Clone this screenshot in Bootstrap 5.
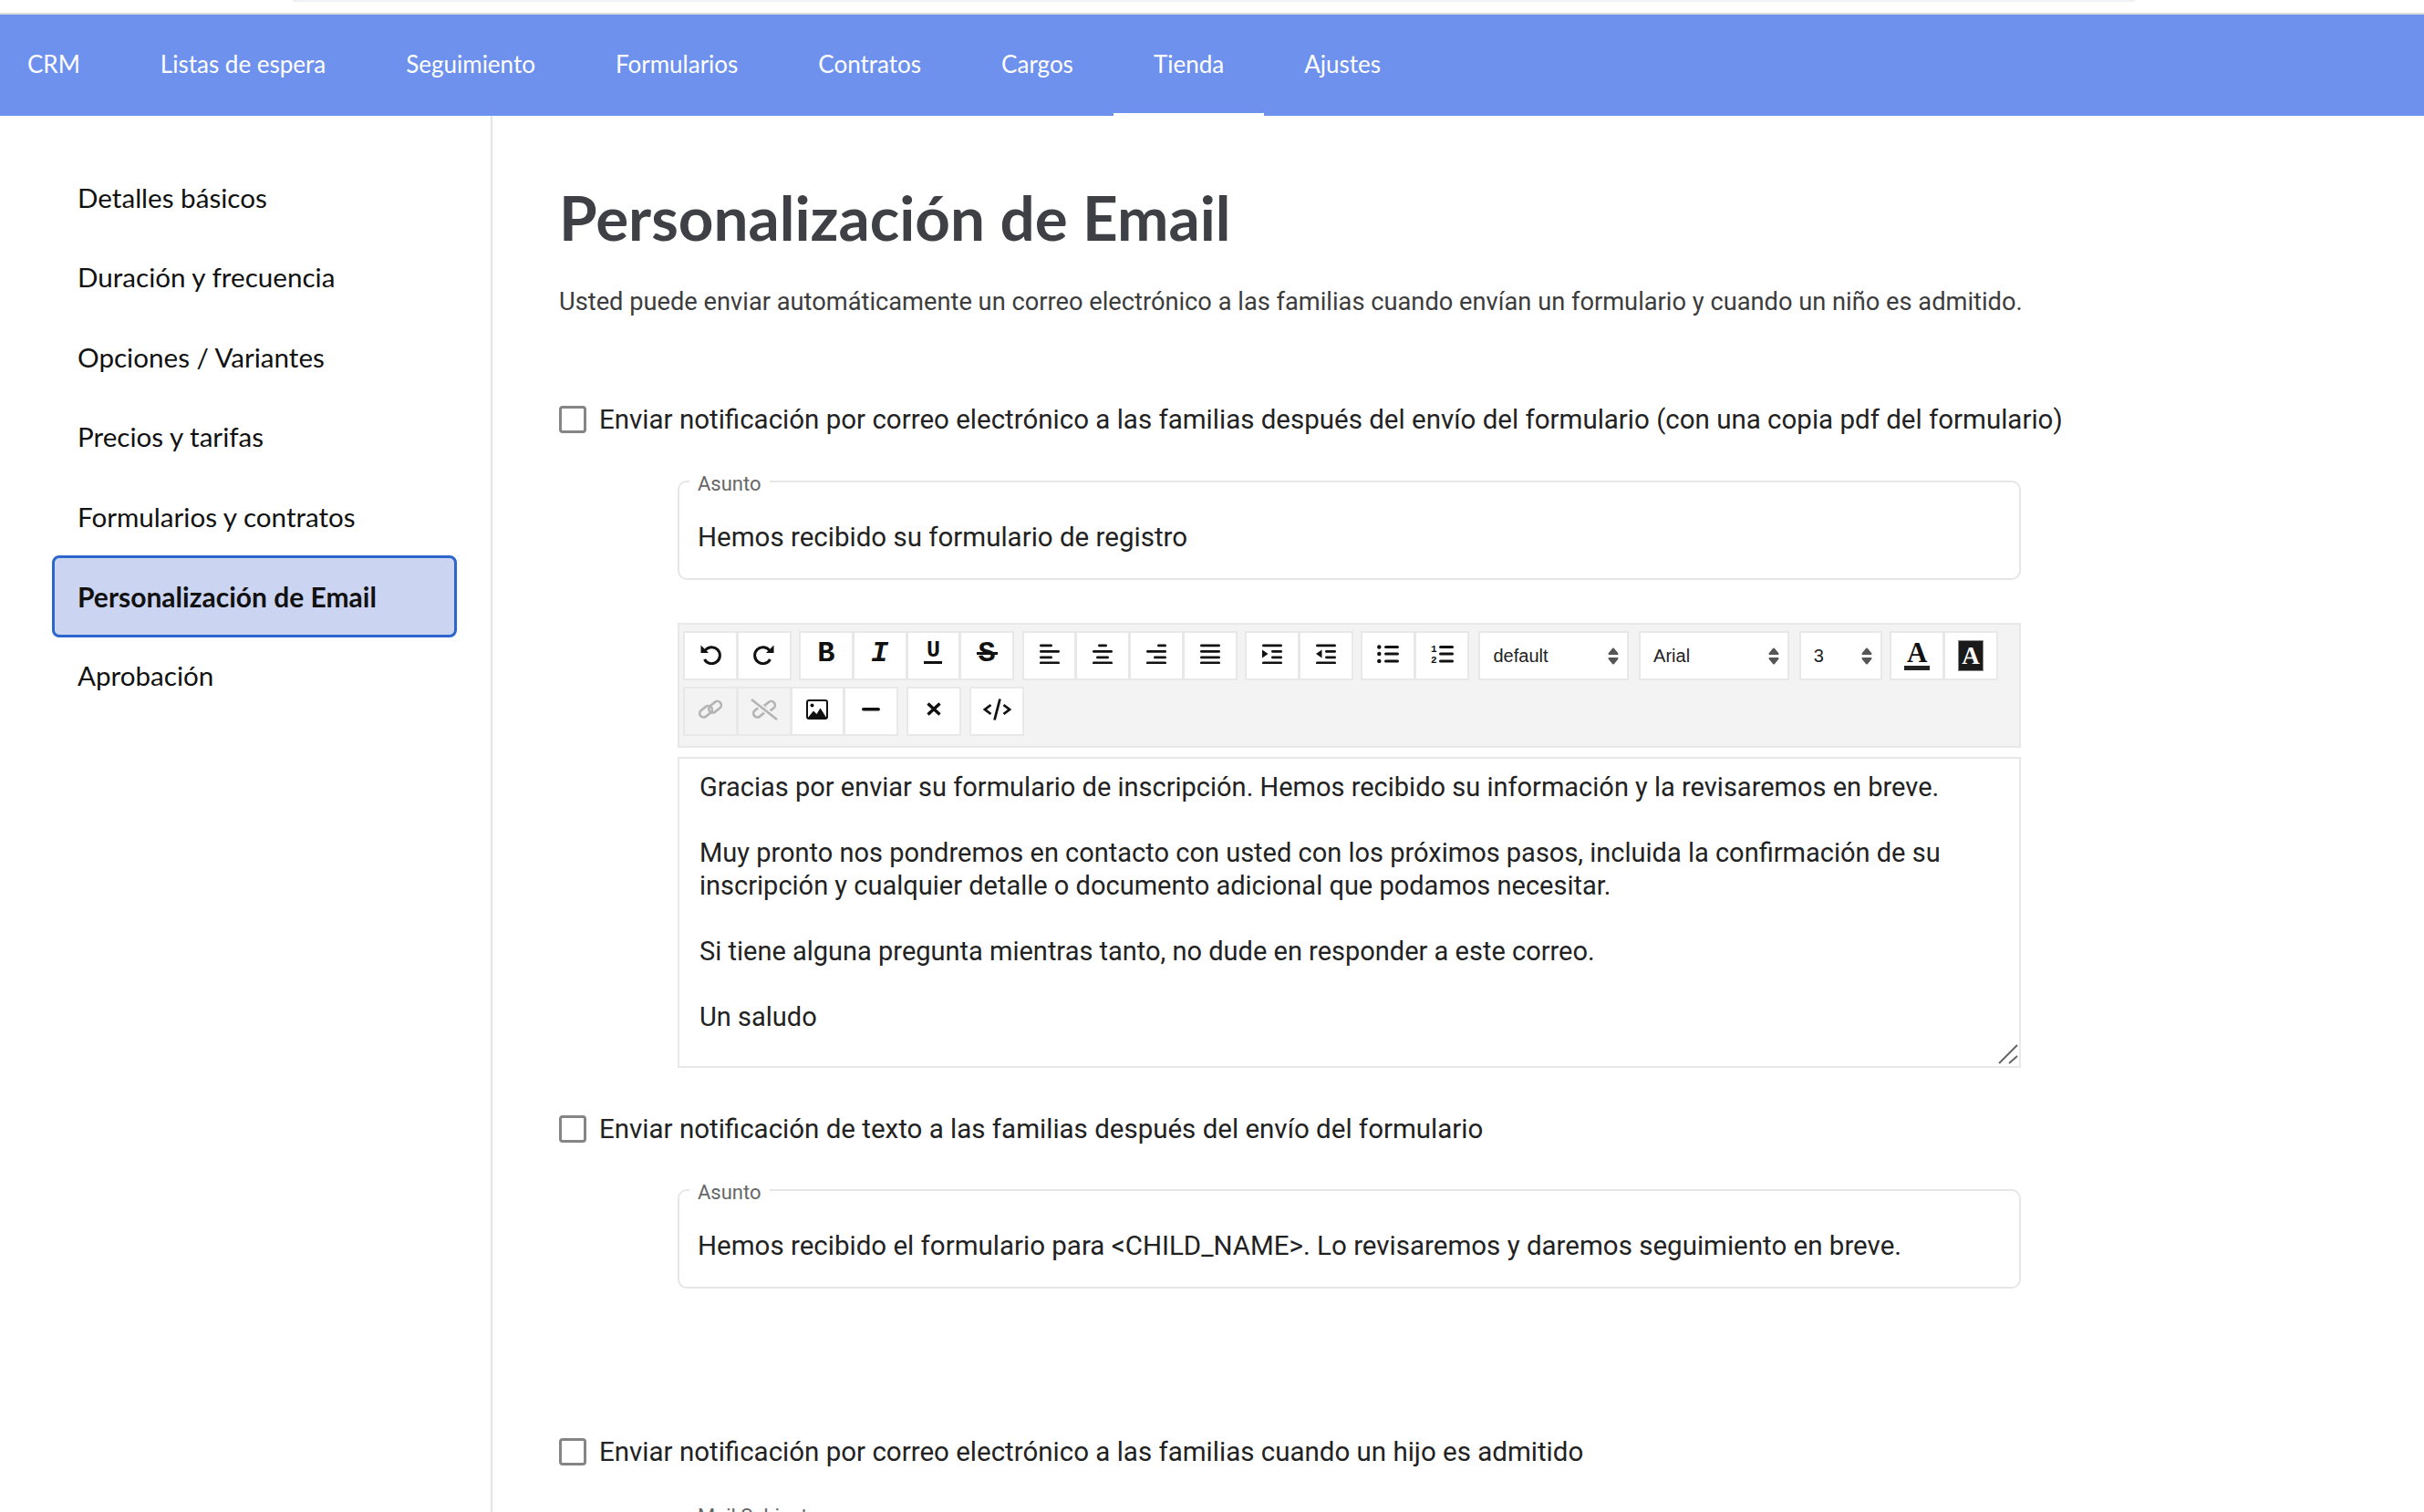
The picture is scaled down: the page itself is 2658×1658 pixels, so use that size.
<!DOCTYPE html>
<html lang="es">
<head>
    <meta charset="UTF-8">
    <title>Personalización de Email</title>
    <link href="https://cdn.jsdelivr.net/npm/bootstrap@5.3.0/dist/css/bootstrap.min.css" rel="stylesheet">
    <style>
        body { font-family: Roboto, sans-serif; color: #222; background: #fff; height: 1658px; overflow: hidden; }

        .top-strip { height: 16px; border-bottom: 2px solid #dcdcdc; }
        .top-strip div { margin-left: 321px; width: 2020px; height: 2px; background: #eef1f5; }

        .main-nav { background: #6e91ee; height: 111px; }
        .main-nav .nav-link { font-family: Lato, sans-serif; font-size: 26px; color: #fff; padding: 0 44px; height: 111px; line-height: 108px; }
        .main-nav .nav-item:first-child .nav-link { padding-left: 30px; }
        .main-nav .nav-link.active { border-bottom: 3px solid #fff; }

        .side-col { width: 540px; height: 1531px; border-right: 2px solid #e4e4e4; padding-top: 46px; flex: none; }
        .side-col .nav-link { font-family: Lato, sans-serif; font-size: 29.6px; color: #111; height: 87.4px; line-height: 87.4px; padding: 0 0 0 85px; }
        .side-col .nav-link.active { font-size: 30px; font-weight: 700; background: #cbd4f1; border: 3px solid #2c66cc; border-radius: 8px; margin: -1.3px 37px -1.3px 57px; height: 90px; line-height: 84px; padding-left: 25px; }

        .content-col { padding: 0 0 0 73px; flex: 1; }
        .page-title { font-family: Lato, sans-serif; font-weight: 700; font-size: 67.4px; color: #3f4045; margin: 71px 0 0; line-height: 80px; }
        .page-intro { font-size: 27.25px; color: #3c3c3c; margin: 33px 0 0; line-height: 40px; }

        .check-row { display: flex; align-items: center; gap: 14px; font-size: 29.5px; line-height: 40px; color: #222; margin: 0; }
        .check-row .form-check-input { width: 30px; height: 30px; margin: 0; border: 3px solid #858585; border-radius: 4px; flex: none; }

        .subject-box { width: 1473px; height: 121px; margin-left: 130px; border: 2px solid #e6e6e6; border-radius: 10px; padding: 0 20px; }
        .subject-box legend { position: relative; top: 3px; float: none; width: auto; font-size: 22px; color: #666; line-height: 26px; padding: 0 9px; margin: 0 0 0 -9px; }
        .subject-box .form-control { border: 0; padding: 0; font-size: 29.5px; color: #222; box-shadow: none; height: 40px; margin-top: 28px; border-radius: 0; }

        .editor-bar { width: 1473px; height: 137px; margin: 47px 0 0 130px; background: #f3f3f3; border: 2px solid #e8e8e8; padding: 7px 4px; display: flex; flex-wrap: wrap; column-gap: 8.6px; row-gap: 6.5px; align-content: flex-start; }
        .editor-bar .btn { width: 59.75px; height: 54px; padding: 0 0 4px; background: #fff; border: 2px solid #e8e8e8; border-radius: 0; display: flex; align-items: center; justify-content: center; color: #111; }
        .editor-bar .btn.is-off { background: #f3f3f3; color: #b4b4b4; }
        .editor-bar .btn.pick-btn { width: 165px; margin-left: 2px; justify-content: space-between; font-family: "Liberation Sans", sans-serif; font-size: 20px; padding: 0 9px 0 14px; color: #222; }
        .editor-bar .btn.pick-small { width: 91px; }
        .editor-bar .btn svg { display: block; }
        .bar-gap { margin-left: .6px; }
        .ico-letter { font-family: "Liberation Mono", monospace; font-weight: 700; font-size: 32px; line-height: 24px; height: 24px; color: #111; }
        .ico-under { font-size: 25px; line-height: 16px; height: 22px; border-bottom: 3px solid #111; width: 20px; text-align: center; }
        .ico-strike { position: relative; }
        .ico-strike::after { content: ""; position: absolute; left: -2px; right: -2px; top: 10px; height: 3px; background: #111; }
        .ico-color { font-family: "Liberation Serif", serif; font-size: 31px; line-height: 24px; height: 31px; width: 28px; text-align: center; border-bottom: 5px solid #222; margin-top: 4px; }
        .ico-fill { font-family: "Liberation Serif", serif; font-size: 27px; line-height: 34px; height: 34px; width: 28px; text-align: center; background: #1a1a1a; color: #fff; outline: 1px solid #888; outline-offset: -1px; margin-top: 4px; }

        .editor-body { position: relative; width: 1473px; height: 341px; margin: 10px 0 0 130px; border: 2px solid #e8e8e8; padding: 13px 22px; font-size: 29px; line-height: 36px; color: #222; }
        .editor-body p { margin: 0 0 36px; }
        .editor-grip { position: absolute; right: 1px; bottom: 2px; }
    </style>
</head>
<body>

    <div class="top-strip"><div></div></div>

    <ul class="nav main-nav">
        <li class="nav-item"><a class="nav-link" href="#">CRM</a></li>
        <li class="nav-item"><a class="nav-link" href="#">Listas de espera</a></li>
        <li class="nav-item"><a class="nav-link" href="#">Seguimiento</a></li>
        <li class="nav-item"><a class="nav-link" href="#">Formularios</a></li>
        <li class="nav-item"><a class="nav-link" href="#">Contratos</a></li>
        <li class="nav-item"><a class="nav-link" href="#">Cargos</a></li>
        <li class="nav-item"><a class="nav-link active" href="#">Tienda</a></li>
        <li class="nav-item"><a class="nav-link" href="#">Ajustes</a></li>
    </ul>

    <div class="d-flex">
        <div class="side-col">
            <nav class="nav flex-column">
                <a class="nav-link" href="#">Detalles básicos</a>
                <a class="nav-link" href="#">Duración y frecuencia</a>
                <a class="nav-link" href="#">Opciones / Variantes</a>
                <a class="nav-link" href="#">Precios y tarifas</a>
                <a class="nav-link" href="#">Formularios y contratos</a>
                <a class="nav-link active" href="#">Personalización de Email</a>
                <a class="nav-link" href="#">Aprobación</a>
            </nav>
        </div>

        <div class="content-col">
            <h1 class="page-title">Personalización de Email</h1>
            <p class="page-intro">Usted puede enviar automáticamente un correo electrónico a las familias cuando envían un formulario y cuando un niño es admitido.</p>

            <label class="check-row" style="margin-top:89px">
                <input class="form-check-input" type="checkbox">
                Enviar notificación por correo electrónico a las familias después del envío del formulario (con una copia pdf del formulario)
            </label>

            <fieldset class="subject-box" style="margin-top:35px">
                <legend>Asunto</legend>
                <input class="form-control" type="text" value="Hemos recibido su formulario de registro">
            </fieldset>

            <div class="editor-bar">
                <div class="btn-group">
                    <button class="btn"><svg width="24" height="24" viewBox="0 0 24 24" fill="none" stroke="currentColor" stroke-width="3"><path d="M6 8.500a9 9 0 1 1 -.5 9.500"/><path d="M1.500 2.500v8.500h8.500z" fill="currentColor" stroke="none"/></svg></button>
                    <button class="btn"><svg width="24" height="24" viewBox="0 0 24 24" fill="none" stroke="currentColor" stroke-width="3"><path d="M18 8.500a9 9 0 1 0 .5 9.500"/><path d="M22.500 2.500v8.500h-8.500z" fill="currentColor" stroke="none"/></svg></button>
                </div>
                <div class="btn-group">
                    <button class="btn"><span class="ico-letter">B</span></button>
                    <button class="btn"><span class="ico-letter fst-italic">I</span></button>
                    <button class="btn"><span class="ico-letter ico-under">U</span></button>
                    <button class="btn"><span class="ico-letter ico-strike">S</span></button>
                </div>
                <div class="btn-group">
                    <button class="btn"><svg width="22" height="22" viewBox="0 0 22 22" fill="currentColor"><rect y="0.500" width="14" height="2.800" rx="1.400"/><rect y="7" width="22" height="2.800" rx="1.400"/><rect y="13.500" width="14" height="2.800" rx="1.400"/><rect y="19.500" width="22" height="2.800" rx="1.400"/></svg></button>
                    <button class="btn"><svg width="22" height="22" viewBox="0 0 22 22" fill="currentColor"><rect x="6" y="0.500" width="10" height="2.800" rx="1.400"/><rect y="7" width="22" height="2.800" rx="1.400"/><rect x="4" y="13.500" width="14" height="2.800" rx="1.400"/><rect y="19.500" width="22" height="2.800" rx="1.400"/></svg></button>
                    <button class="btn"><svg width="22" height="22" viewBox="0 0 22 22" fill="currentColor"><rect x="12" y="0.500" width="10" height="2.800" rx="1.400"/><rect y="7" width="22" height="2.800" rx="1.400"/><rect x="8" y="13.500" width="14" height="2.800" rx="1.400"/><rect y="19.500" width="22" height="2.800" rx="1.400"/></svg></button>
                    <button class="btn"><svg width="22" height="22" viewBox="0 0 22 22" fill="currentColor"><rect y="0.500" width="22" height="2.800" rx="1.400"/><rect y="7" width="22" height="2.800" rx="1.400"/><rect y="13.500" width="22" height="2.800" rx="1.400"/><rect y="19.500" width="22" height="2.800" rx="1.400"/></svg></button>
                </div>
                <div class="btn-group">
                    <button class="btn"><svg width="22" height="22" viewBox="0 0 22 22" fill="currentColor"><rect y="0.500" width="22" height="2.800" rx="1.400"/><path d="M0 6.500l6.500 4.500-6.500 4.500z"/><rect x="10" y="7" width="12" height="2.800" rx="1.400"/><rect x="10" y="13.500" width="12" height="2.800" rx="1.400"/><rect y="19.500" width="22" height="2.800" rx="1.400"/></svg></button>
                    <button class="btn"><svg width="22" height="22" viewBox="0 0 22 22" fill="currentColor"><rect y="0.500" width="22" height="2.800" rx="1.400"/><path d="M6.500 6.500l-6.500 4.500 6.500 4.500z"/><rect x="10" y="7" width="12" height="2.800" rx="1.400"/><rect x="10" y="13.500" width="12" height="2.800" rx="1.400"/><rect y="19.500" width="22" height="2.800" rx="1.400"/></svg></button>
                </div>
                <div class="btn-group">
                    <button class="btn"><svg width="24" height="20" viewBox="0 0 24 20" fill="currentColor"><circle cx="2.300" cy="2.500" r="2.200"/><circle cx="2.300" cy="10" r="2.200"/><circle cx="2.300" cy="18" r="2.200"/><rect x="8" y="1" width="16" height="3" rx="1.500"/><rect x="8" y="8.500" width="16" height="3" rx="1.500"/><rect x="8" y="16.500" width="16" height="3" rx="1.500"/></svg></button>
                    <button class="btn"><svg width="25" height="23" viewBox="0 0 25 23" fill="currentColor"><text x="0" y="9" font-family="Liberation Mono" font-weight="700" font-size="11">1</text><text x="0" y="21" font-family="Liberation Mono" font-weight="700" font-size="11">2</text><rect x="9" y="2" width="16" height="3" rx="1.500"/><rect x="9" y="9.500" width="16" height="3" rx="1.500"/><rect x="9" y="17.500" width="16" height="3" rx="1.500"/></svg></button>
                </div>
                <button class="btn pick-btn">default <svg width="12" height="19" viewBox="0 0 12 19" fill="#555" stroke="#555" stroke-width="2" stroke-linejoin="round"><path d="M6 1.500l4.500 5.500h-9zM6 17.500l-4.500-5.500h9z"/></svg></button>
                <button class="btn pick-btn">Arial <svg width="12" height="19" viewBox="0 0 12 19" fill="#555" stroke="#555" stroke-width="2" stroke-linejoin="round"><path d="M6 1.500l4.500 5.500h-9zM6 17.500l-4.500-5.500h9z"/></svg></button>
                <button class="btn pick-btn pick-small">3 <svg width="12" height="19" viewBox="0 0 12 19" fill="#555" stroke="#555" stroke-width="2" stroke-linejoin="round"><path d="M6 1.500l4.500 5.500h-9zM6 17.500l-4.500-5.500h9z"/></svg></button>
                <div class="btn-group">
                    <button class="btn"><span class="ico-letter ico-color">A</span></button>
                    <button class="btn"><span class="ico-letter ico-fill">A</span></button>
                </div>

                <div class="btn-group">
                    <button class="btn is-off"><svg width="30" height="24" viewBox="0 0 30 24" fill="none" stroke="currentColor" stroke-width="2.600"><rect x="2.500" y="10" width="15" height="8.500" rx="4.200" transform="rotate(-38 10 14.200)"/><rect x="12.500" y="5" width="15" height="8.500" rx="4.200" transform="rotate(-38 20 9.200)"/></svg></button>
                    <button class="btn is-off"><svg width="30" height="24" viewBox="0 0 30 24" fill="none" stroke="currentColor" stroke-width="2.600"><rect x="2.500" y="10" width="15" height="8.500" rx="4.200" transform="rotate(-38 10 14.200)"/><rect x="12.500" y="5" width="15" height="8.500" rx="4.200" transform="rotate(-38 20 9.200)"/><path d="M1 1l28 22" stroke="#f3f3f3" stroke-width="6"/><path d="M1 1l28 22"/></svg></button>
                    <button class="btn"><svg width="24" height="22" viewBox="0 0 24 22"><rect x="1" y="1" width="22" height="20" rx="2" fill="#fff" stroke="#111" stroke-width="2"/><circle cx="6.500" cy="6.500" r="2" fill="#111"/><path d="M1.500 20.500l6.500-8 3.500 3.500 4-6.500 7 11z" fill="#111"/></svg></button>
                    <button class="btn"><svg width="20" height="4" viewBox="0 0 20 4" fill="currentColor"><rect width="20" height="3.600" rx="1.800"/></svg></button>
                </div>
                <div class="btn-group bar-gap">
                    <button class="btn"><svg width="16" height="15" viewBox="0 0 16 15" fill="none" stroke="currentColor" stroke-width="3.400"><path d="M1.500 1.500l13 12M14.500 1.500l-13 12"/></svg></button>
                </div>
                <div class="btn-group bar-gap">
                    <button class="btn"><svg width="31" height="24" viewBox="0 0 31 24" fill="none" stroke="currentColor" stroke-width="2.800"><path d="M8.500 7l-6.500 5 6.500 5M22.500 7l6.500 5-6.500 5"/><path d="M18.500 .500l-6 23"/></svg></button>
                </div>
            </div>

            <div class="editor-body">
                <p>Gracias por enviar su formulario de inscripción. Hemos recibido su información y la revisaremos en breve.</p>
                <p>Muy pronto nos pondremos en contacto con usted con los próximos pasos, incluida la confirmación de su inscripción y cualquier detalle o documento adicional que podamos necesitar.</p>
                <p>Si tiene alguna pregunta mientras tanto, no dude en responder a este correo.</p>
                <p>Un saludo</p>
                <svg class="editor-grip" width="22" height="22" viewBox="0 0 22 22" fill="none" stroke="#666" stroke-width="2"><path d="M1 21L21 1M12 21l9-8"/></svg>
            </div>

            <label class="check-row" style="margin-top:47px">
                <input class="form-check-input" type="checkbox">
                Enviar notificación de texto a las familias después del envío del formulario
            </label>

            <fieldset class="subject-box" style="margin-top:34px">
                <legend>Asunto</legend>
                <input class="form-control" type="text" value="Hemos recibido el formulario para &lt;CHILD_NAME&gt;. Lo revisaremos y daremos seguimiento en breve.">
            </fieldset>

            <label class="check-row" style="margin-top:159px">
                <input class="form-check-input" type="checkbox">
                Enviar notificación por correo electrónico a las familias cuando un hijo es admitido
            </label>

            <fieldset class="subject-box" style="margin-top:35px">
                <legend>Mail Subject</legend>
            </fieldset>
        </div>
    </div>

</body>
</html>
